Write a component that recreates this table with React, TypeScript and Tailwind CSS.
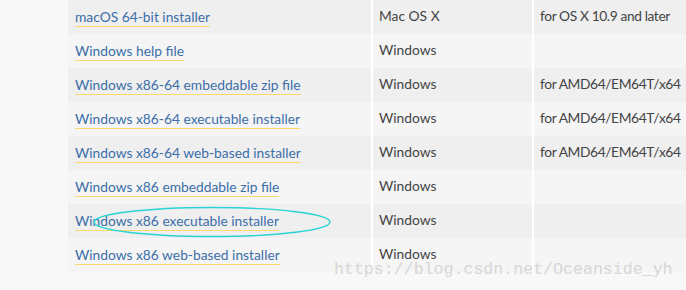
import React from 'react';

const rows = [
  { name: 'macOS 64-bit installer', os: 'Mac OS X', desc: 'for OS X 10.9 and later' },
  { name: 'Windows help file', os: 'Windows', desc: '' },
  { name: 'Windows x86-64 embeddable zip file', os: 'Windows', desc: 'for AMD64/EM64T/x64' },
  { name: 'Windows x86-64 executable installer', os: 'Windows', desc: 'for AMD64/EM64T/x64' },
  { name: 'Windows x86-64 web-based installer', os: 'Windows', desc: 'for AMD64/EM64T/x64' },
  { name: 'Windows x86 embeddable zip file', os: 'Windows', desc: '' },
  { name: 'Windows x86 executable installer', os: 'Windows', desc: '' },
  { name: 'Windows x86 web-based installer', os: 'Windows', desc: '' },
];

const App: React.FC = () => {
  return (
    <div className="relative w-[686px] h-[290px] overflow-hidden bg-[#f8f8f8] font-['Lato','Noto_Sans',sans-serif] text-[13.8px]">
      <div className="pl-[68px]">
        {rows.map((r, i) => (
          <div key={i} className={`flex h-[34px] whitespace-nowrap ${i % 2 === 0 ? 'bg-[#efefef]' : 'bg-[#f5f5f5]'}`}>
            <div className="w-[305px] shrink-0 border-r-2 border-white pl-[7px] flex items-center">
              <span className="text-[#3b6ea8] border-b border-[#fcd96b] leading-[19px] mb-[1px]">{r.name}</span>
            </div>
            <div className="w-[161px] shrink-0 border-r-2 border-white pl-[6px] pb-[2px] flex items-center text-[#444]">{r.os}</div>
            <div className="flex-1 min-w-0 pl-[6px] pb-[2px] flex items-center text-[#444] tracking-[-0.4px]">{r.desc}</div>
          </div>
        ))}
      </div>

      {/* highlight ellipse */}
      <svg className="absolute left-[90px] top-[205px]" width="245" height="36" viewBox="0 0 245 36">
        <ellipse cx="122" cy="17" rx="118" ry="14.5" fill="none" stroke="#29d3d3" strokeWidth="1.4" />
      </svg>

      {/* watermark */}
      <div className="absolute left-[334px] top-[258px] font-['Liberation_Mono',monospace] text-[16.6px] text-[#cfcfcf] opacity-80 whitespace-nowrap">
        https://blog.csdn.net/Oceanside_yh
      </div>
    </div>
  );
};

export default App;
